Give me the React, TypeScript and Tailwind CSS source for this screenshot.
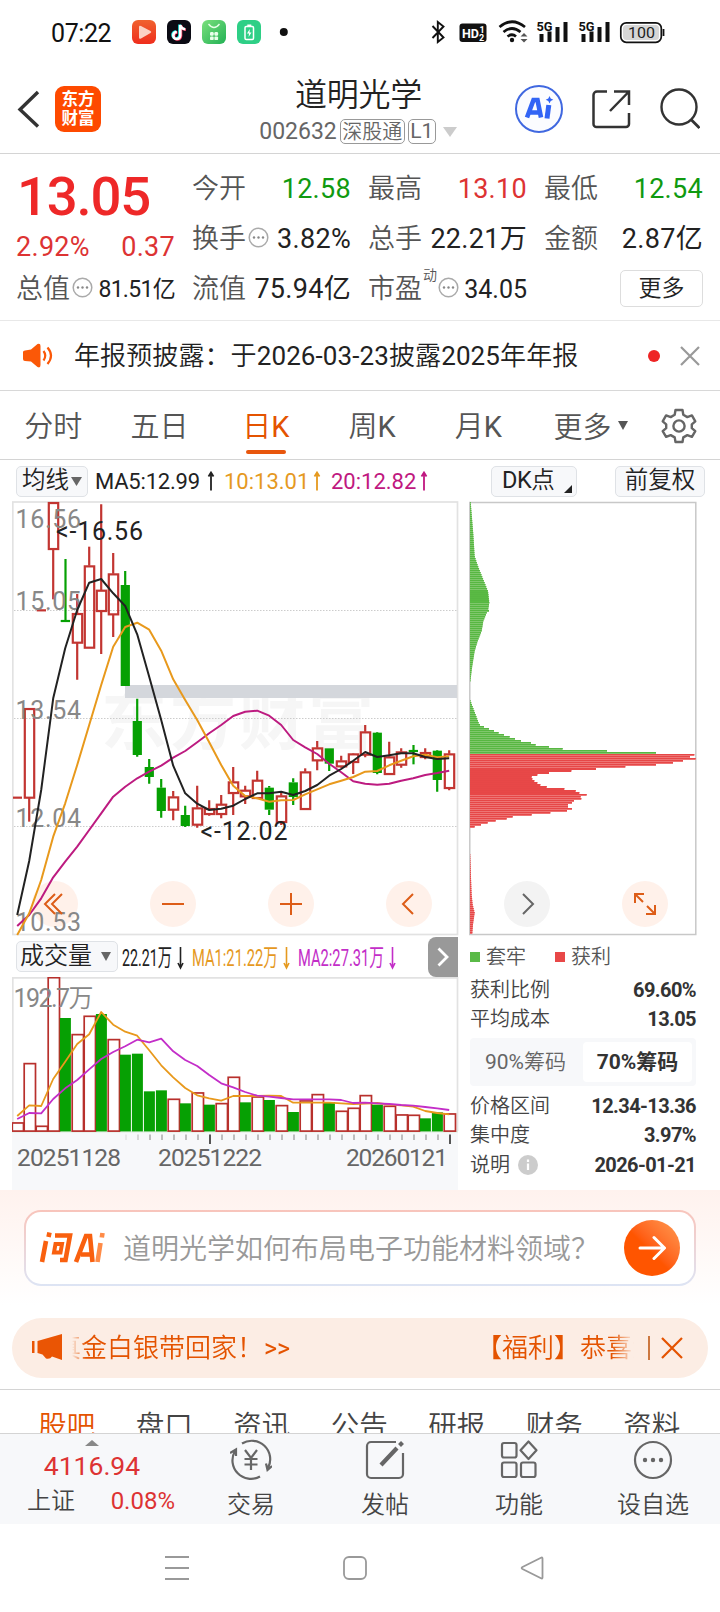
import React from "react";

type Candle = { c: "r" | "g"; hi: number; lo: number; t: number; b: number };

const RED = "#c23531";
const GREEN = "#06a003";

const px = (i: number) => 17.2 + i * 12;
const py = (v: number) => 495 + v / 3;
const vy = (v: number) => 930 + v / 3;

const rawCandles: [("r" | "g"), number, number, number, number][] = [
  ["r", 908, 908, 908, 908], ["r", 640, 980, 640, 909], ["r", 346, 346, 346, 346], ["r", 22, 313, 22, 163],
  ["g", 192, 378, 378, 378], ["r", 297, 554, 355, 444], ["r", 155, 459, 212, 459], ["r", 28, 477, 285, 349],
  ["r", 174, 426, 236, 359], ["g", 228, 573, 270, 573], ["g", 611, 785, 678, 780], ["g", 792, 866, 816, 846],
  ["g", 852, 968, 878, 948], ["r", 888, 976, 905, 945], ["g", 932, 996, 960, 993], ["r", 872, 998, 938, 990],
  ["r", 916, 962, 940, 958], ["r", 900, 970, 927, 958], ["r", 816, 960, 860, 895], ["r", 872, 927, 885, 905],
  ["r", 827, 912, 855, 910], ["g", 873, 960, 878, 944], ["r", 888, 990, 902, 982], ["g", 850, 930, 862, 906],
  ["r", 820, 943, 830, 943], ["r", 738, 826, 758, 797], ["g", 760, 828, 760, 806], ["r", 782, 818, 797, 815],
  ["r", 775, 837, 776, 802], ["r", 690, 787, 710, 780], ["g", 711, 838, 713, 834], ["r", 740, 840, 785, 838],
  ["r", 760, 818, 770, 810], ["g", 750, 808, 768, 768], ["r", 760, 793, 772, 787], ["g", 765, 890, 767, 855],
  ["r", 766, 886, 776, 880],
];
const candles: Candle[] = rawCandles.map(([c, hi, lo, t, b]) => ({ c, hi: py(hi), lo: py(lo), t: py(t), b: py(b) }));

const ma5 = [1260, 1098, 885, 610, 460, 345, 263, 252, 295, 333, 418, 545, 675, 812, 895, 926, 945, 941, 932, 912, 895, 895, 890, 900, 888, 870, 842, 822, 797, 771, 786, 781, 775, 775, 786, 792, 790];
const ma10 = [1320, 1255, 1155, 1025, 925, 810, 690, 570, 455, 396, 383, 404, 467, 553, 615, 675, 742, 810, 872, 903, 910, 920, 916, 915, 898, 883, 868, 857, 846, 830, 828, 811, 797, 784, 779, 787, 784];
const ma20 = [1293, 1260, 1210, 1147, 1100, 1055, 1005, 955, 905, 875, 850, 830, 812, 788, 768, 742, 715, 690, 663, 650, 647, 662, 690, 735, 757, 777, 806, 832, 859, 866, 869, 866, 857, 850, 840, 834, 827];

const volumes = [578, 400, 588, 142, 264, 313, 258, 252, 328, 374, 371, 484, 481, 507, 520, 488, 524, 520, 441, 517, 500, 510, 526, 546, 512, 493, 516, 543, 534, 496, 524, 528, 554, 555, 565, 547, 551];
const volumeColors = "rrrrgrrgrggggrgrgrrgrgrgrrgrrrgrrrggr";
const vma1 = [558, 526, 528, 447, 395, 342, 313, 246, 284, 305, 317, 361, 406, 442, 474, 496, 505, 512, 498, 498, 498, 497, 498, 518, 518, 518, 518, 520, 522, 521, 519, 524, 526, 530, 543, 549, 553];
const vma2 = [567, 549, 550, 507, 475, 450, 418, 387, 366, 349, 329, 337, 326, 364, 390, 408, 435, 460, 472, 486, 497, 500, 504, 508, 508, 508, 508, 510, 519, 518, 520, 522, 525, 527, 531, 535, 540];

const line = (vals: number[], f: (v: number) => number) => vals.map((v, i) => `${px(i)},${f(v).toFixed(1)}`).join(" ");

const chipShape: [number, number][] = [
  [22, 2], [120, 10], [185, 14], [215, 24], [260, 42], [290, 54], [325, 58], [343, 55], [347, 62], [351, 52], [380, 40], [410, 35],
  [440, 23], [470, 14], [520, 6], [570, 0], [615, 0], [655, 15], [690, 28], [697, 42], [703, 57], [709, 72], [715, 86],
  [721, 102], [727, 119], [733, 135], [739, 153], [745, 183], [751, 197], [757, 237], [763, 278], [769, 411], [775, 558],
  [781, 673], [787, 660], [793, 677], [799, 639], [805, 609], [811, 558], [817, 466], [823, 378], [829, 304], [835, 237],
  [841, 202], [847, 185], [853, 187], [859, 193], [865, 202], [871, 211], [877, 230], [883, 283], [889, 317], [895, 328],
  [901, 350], [907, 332], [913, 334], [919, 312], [925, 306], [931, 294], [937, 294], [943, 306], [949, 291], [955, 241],
  [961, 185], [967, 128], [973, 110], [979, 77], [985, 53], [991, 33], [997, 14], [1003, 0], [1060, 0], [1150, 3],
  [1200, 5], [1230, 8], [1255, 14], [1290, 9], [1317, 7],
];
const chipWidth = (y: number) => {
  for (let i = 1; i < chipShape.length; i++) {
    const [y0, w0] = chipShape[i - 1];
    const [y1, w1] = chipShape[i];
    if (y <= y1) return w0 + ((w1 - w0) * (y - y0)) / (y1 - y0);
  }
  return 0;
};
const chipRows: { y: number; w: number; red: boolean; solid: boolean }[] = [];
for (let v = 25; v < 1317; v += 6) {
  const w = chipWidth(v) / 3;
  if (w > 0.2) chipRows.push({ y: Math.round(495 + (v - 3) / 3), w, red: v > 778, solid: (v > 285 && v < 322) || (v > 820 && v < 900) });
}

function Arrow({ color }: { color: string }) {
  return (
    <svg className="shrink-0" width="8" height="20" viewBox="0 0 8 20" fill="none" stroke={color} strokeWidth="1.8">
      <path d="M4 19.500V2M1.500 5.500L4 1.500L6.500 5.500" />
    </svg>
  );
}

function Dots() {
  return (
    <svg className="shrink-0" width="21" height="21" viewBox="0 0 21 21" fill="none">
      <circle cx="10.5" cy="10.5" r="9.3" stroke="#aaa" strokeWidth="1.5" />
      <circle cx="6" cy="10.5" r="1.2" fill="#888" />
      <circle cx="10.5" cy="10.5" r="1.2" fill="#888" />
      <circle cx="15" cy="10.5" r="1.2" fill="#888" />
    </svg>
  );
}

function StatusBar() {
  return (
    <div className="flex h-16 items-center pl-[51px] pr-[55px] text-[#111]">
      <span className="w-[81px] pt-[2px] text-[25px] leading-none tracking-[-0.4px]">07:22</span>
      <svg width="160" height="24" viewBox="0 0 160 24">
        <defs>
          <linearGradient id="s1" x1="0" y1="0" x2="0" y2="1"><stop stopColor="#f0622f" /><stop offset="1" stopColor="#ef2d1c" /></linearGradient>
          <linearGradient id="s2" x1="0" y1="0" x2="1" y2="1"><stop stopColor="#7be07c" /><stop offset="1" stopColor="#22b155" /></linearGradient>
        </defs>
        <rect width="24" height="24" rx="6" fill="url(#s1)" />
        <path d="M7 7Q7 5 9 6L18.500 11Q20 12 18.500 13L9 18.500Q7 19.300 7 17.500Z" fill="#fbd2c4" />
        <rect x="35" width="24" height="24" rx="6" fill="#0b0b14" />
        <g fill="none" strokeWidth="2.600">
          <path d="M47.500 4.500V15A3.500 3.500 0 1 1 44 11.500M47.500 4.500Q48.500 8.500 52.500 8.800" stroke="#25f4ee" />
          <path d="M49 5.500V16A3.500 3.500 0 1 1 45.500 12.500M49 5.500Q50 9.500 54 9.800" stroke="#fe2c55" />
          <path d="M48.300 5V15.500A3.500 3.500 0 1 1 44.800 12M48.300 5Q49.300 9 53.300 9.300" stroke="#fff" />
        </g>
        <rect x="70" width="24" height="24" rx="6" fill="url(#s2)" />
        <path d="M76.500 4Q82 11 87.500 4" fill="none" stroke="#e6ffe6" strokeWidth="1.300" />
        <g fill="#eaffea"><rect x="78" y="12" width="3.700" height="3.700" rx="1.200" /><rect x="82.400" y="12" width="3.700" height="3.700" rx="1.200" /><rect x="78" y="16.400" width="3.700" height="3.700" rx="1.200" /><rect x="82.400" y="16.400" width="3.700" height="3.700" rx="1.200" /></g>
        <rect x="105" width="24" height="24" rx="6" fill="#2ecf86" />
        <rect x="113" y="6.500" width="8.500" height="13" rx="1.200" fill="none" stroke="#fff" strokeWidth="1.500" />
        <rect x="115.300" y="4.500" width="4" height="2" fill="#fff" />
        <path d="M117.800 9L115 13.500H117L116.600 17L119.500 12.500H117.500Z" fill="#fff" />
        <circle cx="151.800" cy="12" r="4" fill="#111" />
      </svg>
      <svg className="ml-auto" width="234" height="24" viewBox="432 20 234 24" fill="none">
        <path d="M433.500 26L444.500 37.500L438.800 42V22L444.500 26.500L433.500 38" stroke="#111" strokeWidth="1.900" />
        <rect x="460.500" y="23.500" width="27" height="18.500" rx="3" fill="#111" />
        <text x="463" y="38" fontSize="13.500" fontWeight="700" fill="#fff" textLength="17" lengthAdjust="spacingAndGlyphs">HD</text>
        <text x="480.500" y="33" fontSize="9" fontWeight="700" fill="#fff">1</text>
        <text x="480" y="41" fontSize="9" fontWeight="700" fill="#fff">2</text>
        <g stroke="#111" strokeWidth="2.700"><path d="M500.500 27Q513 16.500 526 27" /><path d="M504.500 32Q513 25 521.500 32" /><path d="M508.500 36.500Q513 33 517 36.500" /></g>
        <circle cx="513" cy="40" r="2.200" fill="#111" />
        <path d="M521.500 36.500L525 33L528.500 36.500ZM521.500 39L525 42.500L528.500 39Z" fill="#555" />
        {[538, 580].map((x) => (
          <g key={x} fill="#111">
            <text x={x - 0.5} y="31" fontSize="13" fontWeight="700" textLength="16" lengthAdjust="spacingAndGlyphs">5G</text>
            <rect x={x + 2.5} y="34" width="4" height="8" /><rect x={x + 10.5} y="31.500" width="4" height="10.500" />
            <rect x={x + 18.5} y="27" width="4" height="15" /><rect x={x + 26.5} y="22" width="4" height="20" />
          </g>
        ))}
        <rect x="621.800" y="22.800" width="40.500" height="19.500" rx="5.500" fill="#fff" stroke="#111" strokeWidth="1.700" />
        <rect x="624" y="25" width="36" height="15" rx="3.500" fill="#d6d6d6" />
        <path d="M664.500 29V36" stroke="#111" strokeWidth="1.800" />
        <text x="629" y="37.500" fontSize="14.500" fill="#222" textLength="27" lengthAdjust="spacingAndGlyphs">100</text>
      </svg>
    </div>
  );
}

function Header() {
  return (
    <div className="flex h-[90px] items-center border-b border-[#d4d4d4] pl-[17px] pr-5">
      <svg width="24" height="40" viewBox="17 89 24 40" fill="none" stroke="#333" strokeWidth="3.400"><path d="M38 92L20 109.500L38 126.500" /></svg>
      <div className="ml-[14px] flex h-[46px] w-[46px] flex-col items-center justify-center gap-[2px] rounded-[9px] bg-[#fe4a00] text-[16.5px] font-bold leading-[17px] text-white">
        <span>东方</span>
        <span>财富</span>
      </div>
      <div className="ml-[157px] flex w-[200px] flex-col items-center pt-[3px]">
        <div className="pl-px text-[32px] font-[350] leading-[38px] tracking-[-0.3px] text-[#222]">道明光学</div>
        <div className="mt-[5px] flex h-[26px] items-center text-[#666]">
          <span className="text-[23px] leading-none">002632</span>
          <span className="ml-[3px] flex h-[25px] w-[65px] items-center justify-center rounded-[5px] border-[1.5px] border-[#999] text-[20px] font-[350] leading-none">深股通</span>
          <span className="ml-[3px] flex h-[25px] w-[28px] items-center justify-center rounded-[5px] border-[1.5px] border-[#999] text-[21px] leading-none">L1</span>
          <svg className="ml-[7px]" width="14" height="10" viewBox="0 0 14 10"><path d="M0 0H14L7 10Z" fill="#ccc" /></svg>
        </div>
      </div>
      <svg className="ml-auto" width="186" height="50" viewBox="514 84 186 50" fill="none">
        <circle cx="539" cy="109" r="23" stroke="#4068e0" strokeWidth="2" fill="#fbfcff" />
        <path d="M527 117.500L533.500 100H537.500L541 117.500M530 112.500H539" stroke="#3264f5" strokeWidth="4.600" />
        <path d="M548.800 105L547 118.500" stroke="#3264f5" strokeWidth="5" />
        <path d="M549.500 96L550.700 98.600L553.300 99.800L550.700 101L549.500 103.600L548.300 101L545.700 99.800L548.300 98.600Z" fill="#3264f5" />
        <path d="M607 91.500H597A3.500 3.500 0 0 0 593.500 95V124A3 3 0 0 0 596.500 127H626A3 3 0 0 0 629 124V113M610 111L628.500 92M614 91.500H629V105" stroke="#333" strokeWidth="2.500" />
        <circle cx="679" cy="107" r="17.500" stroke="#333" strokeWidth="2.400" />
        <path d="M691 119.500L699.500 128" stroke="#333" strokeWidth="2.800" />
      </svg>
    </div>
  );
}

function Cell({ label, value, color = "text-[#222]", dots, size = "text-[27px] tracking-[0.3px]" }: { label: string; value: string; color?: string; dots?: boolean; size?: string }) {
  return (
    <div className="flex h-[50px] items-center whitespace-nowrap leading-none">
      <span className="text-[27px] font-[350] text-[#555]">{label}</span>
      {dots && <span className="mb-[3px] ml-[2px]"><Dots /></span>}
      <span className={`ml-auto ${size} ${color}`}>{value}</span>
    </div>
  );
}

function Quote() {
  return (
    <div className="grid h-[167px] grid-cols-[159px_159px_159px_159px] grid-rows-[50px_50px_50px] gap-x-[17px] border-b border-[#e8e8e8] pl-4 pr-[16px] pt-[10px]">
      <div className="row-span-2 leading-none">
        <div className="pl-[1px] pt-[5px] text-[54.5px] font-medium tracking-[-1.2px] text-[#ee2828]">13.05</div>
        <div className="mt-[10px] flex justify-between text-[27px] tracking-[0.3px] text-[#dd3333]"><span>2.92%</span><span>0.37</span></div>
      </div>
      <Cell label="今开" value="12.58" color="text-[#109a10]" />
      <Cell label="最高" value="13.10" color="text-[#dd3333]" />
      <Cell label="最低" value="12.54" color="text-[#109a10]" />
      <Cell label="换手" value="3.82%" dots />
      <Cell label="总手" value="22.21万" />
      <Cell label="金额" value="2.87亿" />
      <Cell label="总值" value="81.51亿" dots size="text-[23px] tracking-[-0.7px]" />
      <Cell label="流值" value="75.94亿" />
      <div className="flex h-[50px] items-center whitespace-nowrap leading-none">
        <span className="text-[27px] font-[350] text-[#555]">市盈</span>
        <span className="mb-[28px] ml-[1px] text-[14px] font-[350] text-[#555]">动</span>
        <span className="mb-[3px] ml-[1px]"><Dots /></span>
        <span className="ml-auto text-[25px] text-[#222]">34.05</span>
      </div>
      <div className="flex h-[48px] items-center justify-end">
        <div className="flex h-[37px] w-[83px] items-center justify-center rounded-[5px] border-[1.5px] border-[#ddd] text-[23px] font-[350] leading-none text-[#222]">更多</div>
      </div>
    </div>
  );
}

function Notice() {
  return (
    <div className="flex h-[70px] items-center border-b border-[#d8d8d8] pl-[22px] pr-[20px]">
      <svg width="31" height="26" viewBox="0 0 31 26" fill="none">
        <path d="M1 9Q1 7.500 3 7.500L9 6.500L15.500 1Q18.500 0 18.500 3V22Q18.500 25.500 15.500 24L9 18.500L3 18Q1 18 1 16Z" fill="#fb5807" />
        <path d="M21.500 8Q25 12.500 21.500 17.500M25.500 4.500Q32.500 12.500 25.500 21" stroke="#fb5807" strokeWidth="2.200" />
      </svg>
      <span className="ml-[21px] whitespace-nowrap text-[26px] font-[350] leading-none tracking-[0.1px] text-[#222]">
        年报预披露：于<span className="font-normal">2026-03-23</span>披露<span className="font-normal">2025</span>年年报
      </span>
      <span className="ml-auto h-3 w-3 rounded-full bg-[#ee2424]" />
      <svg className="ml-5" width="20" height="20" viewBox="0 0 20 20" stroke="#999" strokeWidth="2.200"><path d="M1 1L19 19M19 1L1 19" /></svg>
    </div>
  );
}

function PeriodTabs() {
  return (
    <div className="flex h-[69px] border-b border-[#d4d4d4] text-[29px] leading-none text-[#555]">
      {["分时", "五日", "日K", "周K", "月K"].map((t) => (
        <div key={t} className={`flex w-[106.3px] shrink-0 flex-col items-center pt-[22px] font-[350] ${t === "日K" ? "text-[#e45300]" : ""}`}>
          <span>{t[0]}{t[1] === "K" ? <span className="font-normal">K</span> : t[1]}</span>
          {t === "日K" && <span className="mt-[8px] h-[4px] w-10 rounded-sm bg-[#e8560d]" />}
        </div>
      ))}
      <div className="flex h-[74px] items-center pl-[22px] font-[350]">更多</div>
      <svg className="ml-[6px] mt-[30px]" width="10" height="9" viewBox="0 0 10 9"><path d="M0 0H10L5 9Z" fill="#555" /></svg>
      <svg className="ml-auto mr-[23px] mt-[17px]" width="36" height="36" viewBox="0 0 36 36" fill="none" stroke="#666" strokeWidth="2.400">
        <path d="M14.500 2H21.500L22.300 6.800L26.300 9.100L30.900 7.400L34.300 13.300L30.800 16.300V20.200L34.300 23.200L30.900 28.800L26.300 27.100L22.300 29.400L21.500 34H14.500L13.700 29.400L9.700 27.100L5.100 28.800L1.700 23.200L5.200 20.200V16.300L1.700 13.300L5.100 7.400L9.700 9.100L13.700 6.800Z" strokeLinejoin="round" />
        <circle cx="18" cy="18" r="5.600" />
      </svg>
    </div>
  );
}

function ChartToolbar() {
  return (
    <div className="flex h-[41px] items-center pl-4 pr-[15px] text-[22px] leading-none">
      <div className="mt-px flex h-[31px] w-[72px] shrink-0 items-center rounded-[5px] border border-[#dfe2e6] bg-[#f7f8fa] pl-[5px] text-[23.5px] font-[350] text-[#222]">
        均线
        <svg className="ml-[2px]" width="11" height="9" viewBox="0 0 11 9"><path d="M0 0H11L5.500 9Z" fill="#666" /></svg>
      </div>
      <span className="ml-[7px] w-[107px] shrink-0 pt-[2px] tracking-[-0.2px] text-[#222]">MA5:12.99</span>
      <span className="ml-[5px] w-[17px]"><Arrow color="#222" /></span>
      <span className="w-[89px] shrink-0 pt-[2px] text-[#e5991f]">10:13.01</span>
      <span className="w-[18px]"><Arrow color="#e5991f" /></span>
      <span className="w-[89px] shrink-0 pt-[2px] text-[#c01880]">20:12.82</span>
      <Arrow color="#c01880" />
      <div className="ml-auto mt-px flex h-[31px] w-[86px] shrink-0 items-center rounded-[5px] border border-[#dfe2e6] bg-[#f7f8fa] pl-[10px] text-[23.5px] font-[350] text-[#222]">
        <span className="font-normal tracking-[-0.5px]">DK</span>点
        <svg className="ml-auto mr-[4px] mt-4" width="8" height="8" viewBox="0 0 8 8"><path d="M8 0V8H0Z" fill="#222" /></svg>
      </div>
      <div className="ml-[38px] mt-px flex h-[31px] w-[90px] shrink-0 items-center justify-center rounded-[5px] border border-[#dfe2e6] bg-[#f7f8fa] text-[23.5px] font-[350] text-[#222]">前复权</div>
    </div>
  );
}

function KLine() {
  return (
    <svg className="block" width="448" height="435" viewBox="12 501 448 435" fill="none">
      <text x="101" y="744" fontSize="66" fontWeight="700" fill="#f6f6f6" textLength="273">东方财富</text>
      <rect x="12.800" y="502" width="444.700" height="432.500" stroke="#e2e2e2" strokeWidth="1.700" />
      {[610.5, 718.5, 826.5].map((y) => <path key={y} d={`M14 ${y}H457`} stroke="#ccc" strokeWidth="1" strokeDasharray="1.500 1.500" />)}
      <rect x="125" y="685" width="332" height="13" fill="#d4d7dc" />
      <g fill="#fff1ea"><circle cx="55" cy="904" r="23" /><circle cx="173" cy="904" r="23" /><circle cx="291" cy="904" r="23" /><circle cx="409" cy="904" r="23" /></g>
      {candles.map((k, i) => {
        const x = px(i);
        const col = k.c === "r" ? RED : GREEN;
        if (k.b - k.t < 1)
          return (
            <g key={i} stroke={col} strokeWidth="2.200">
              <path d={`M${i ? x - 4.5 : 13} ${k.t}H${x + 4.8}`} />
              {k.lo > k.hi && <path d={`M${x + 0.3} ${k.hi}V${k.lo}`} />}
            </g>
          );
        return (
          <g key={i} stroke={col} strokeWidth="2.200">
            <path d={`M${x} ${k.hi}V${k.t}M${x} ${k.b}V${k.lo}`} />
            {k.c === "r" ? <rect x={x - 4.4} y={k.t + 0.7} width="9.400" height={Math.max(k.b - k.t - 1, 1)} /> : <rect x={x - 4.5} y={k.t} width="9.200" height={k.b - k.t} fill={col} stroke="none" />}
          </g>
        );
      })}
      <g fontSize="25" fill="#888">
        <text x="15.500" y="527.500" textLength="65.500">16.56</text>
        <text x="15.500" y="609.500" textLength="65.500">15.05</text>
        <text x="15.500" y="718.500" textLength="65.500">13.54</text>
        <text x="15.500" y="827" textLength="65.500">12.04</text>
        <text x="15.500" y="931" textLength="65.500">10.53</text>
      </g>
      <g strokeWidth="2" strokeLinejoin="round">
        <polyline points={line(ma20, py)} stroke="#bd1b80" />
        <polyline points={line(ma10, py)} stroke="#e8991c" />
        <polyline points={line(ma5, py)} stroke="#222" />
      </g>
      <text x="56" y="540" fontSize="25" fill="#222" textLength="87">&lt;-16.56</text>
      <text x="200.500" y="840" fontSize="25" fill="#222" textLength="87">&lt;-12.02</text>
      <g stroke="#dd5d18" strokeWidth="2">
        <path d="M55 894L45 904L55 914M62 894L52 904L62 914M162 904H184M280 904H302M291 893V915M413 894L403 904L413 914" />
      </g>
    </svg>
  );
}

function VolumeHeader() {
  return (
    <div className="flex h-[41px] items-center pl-1">
      <div className="mb-px flex h-[31px] w-[102px] shrink-0 items-center rounded-[5px] border border-[#dfe2e6] bg-[#f7f8fa] pl-[3px] text-[24px] font-[350] leading-none text-[#222]">
        成交量
        <svg className="ml-[9px]" width="10" height="9" viewBox="0 0 10 9"><path d="M0 0H10L5 9Z" fill="#666" /></svg>
      </div>
      <svg className="ml-[3px] shrink-0" width="280" height="40" viewBox="121 936 280 40" fontSize="24">
        <text x="122" y="964.500" fill="#222" textLength="50" lengthAdjust="spacingAndGlyphs">22.21万</text>
        <text x="192" y="964.500" fill="#e5991f" textLength="86" lengthAdjust="spacingAndGlyphs">MA1:21.22万</text>
        <text x="298" y="964.500" fill="#c32ec8" textLength="86" lengthAdjust="spacingAndGlyphs">MA2:27.31万</text>
        <g fill="none" strokeWidth="1.600">
          <path d="M180.500 946V967M178 962L180.500 967L183 962" stroke="#222" />
          <path d="M286.500 946V967M284 962L286.500 967L289 962" stroke="#e5991f" />
          <path d="M392.500 946V967M390 962L392.500 967L395 962" stroke="#c32ec8" />
        </g>
      </svg>
      <div className="ml-auto flex h-10 w-[30px] shrink-0 items-center justify-center rounded-l-lg bg-[#999]">
        <svg width="12" height="20" viewBox="0 0 12 20" fill="none" stroke="#fff" strokeWidth="2.800"><path d="M1.500 1.500L10 10L1.500 18.500" /></svg>
      </div>
    </div>
  );
}

function Volume() {
  return (
    <svg className="block" width="448" height="213" viewBox="12 977 448 213" fill="none">
      <rect x="12" y="1132" width="446" height="58" fill="#f7f8fa" />
      <path d="M12.800 1131V977.800H457.500V1131" stroke="#e2e2e2" strokeWidth="1.700" />
      <path d="M12 1131.800H458" stroke="#cfe3cf" strokeWidth="1" />
      {volumes.map((v, i) => {
        const t = vy(v);
        return volumeColors[i] === "r" ? (
          <rect key={i} x={px(i) - 5} y={t + 0.3} width="11.300" height={1130.8 - t} stroke="#b8302c" strokeWidth="1.700" />
        ) : (
          <rect key={i} x={px(i) - 5.3} y={t} width="11" height={1131.4 - t} fill={GREEN} />
        );
      })}
      <text x="13.500" y="1006.500" fontSize="25" fill="#888" textLength="80">192.7<tspan fontWeight="350">万</tspan></text>
      <g strokeWidth="1.800" strokeLinejoin="round">
        <polyline points={line(vma1, vy)} stroke="#e8991c" />
        <polyline points={line(vma2, vy)} stroke="#c32ec8" />
      </g>
      {Array.from({ length: 28 }, (_, n) => {
        const x = 126 + n * 12;
        const big = n === 7 || n === 27;
        return <path key={n} d={`M${x} 1134.500V${big ? 1144 : 1140}`} stroke={big ? "#555" : n < 1 ? "#e3e3e3" : n < 2 ? "#ccc" : "#aaa"} strokeWidth={big ? 2 : 1.5} />;
      })}
      <g fontSize="24.500" fill="#666">
        <text x="17" y="1166" textLength="104">20251128</text>
        <text x="158" y="1166" textLength="104">20251222</text>
        <text x="346" y="1166" textLength="102">20260121</text>
      </g>
    </svg>
  );
}

function ChipChart() {
  return (
    <svg className="block" width="229" height="435" viewBox="469 501 229 435" fill="none">
      <rect x="469.800" y="502.500" width="226" height="432" stroke="#c8c8c8" strokeWidth="1.500" />
      {chipRows.map((r) => (
        <g key={r.y}>
          <rect x="470" y={r.y} width={r.w} height="2" fill={r.red ? (r.solid ? "#e84848" : "#ee7474") : r.solid ? "#5aba44" : "#7fc76c"} />
          <rect x="470" y={r.y} width={r.w} height="1" fill={r.red ? "#e64747" : "#57b742"} />
        </g>
      ))}
      <circle cx="527" cy="904" r="23" fill="#f3f3f3" />
      <circle cx="645" cy="904" r="23" fill="#fff1ea" />
      <path d="M523 894L533 904L523 914" stroke="#666" strokeWidth="2" />
      <path d="M643 902L635.500 894.500M635 903V894H644M647 906L654.500 913.500M655 905V914H646" stroke="#dd5d18" strokeWidth="2" />
    </svg>
  );
}

function Stat({ label, value, info }: { label: string; value: string; info?: boolean }) {
  return (
    <div className="flex h-[29.5px] items-center leading-none">
      <span className="text-[20px] font-[350] text-[#444]">{label}</span>
      {info && (
        <svg className="ml-[8px]" width="20" height="20" viewBox="0 0 20 20"><circle cx="10" cy="10" r="10" fill="#ccc" /><path d="M10 8.500V15M10 4.500V7" stroke="#fff" strokeWidth="2.200" /></svg>
      )}
      <span className="ml-auto text-[20px] font-bold tracking-[-0.6px] text-[#333]">{value}</span>
    </div>
  );
}

function ChipStats() {
  return (
    <div className="ml-[1px] w-[226px] leading-none">
      <div className="flex h-[39px] items-center pt-[2px] text-[20px] font-[350] text-[#555]">
        <span className="h-[10px] w-[10px] bg-[#5aba47]" />
        <span className="ml-[6px] w-[69px]">套牢</span>
        <span className="h-[10px] w-[10px] bg-[#e84848]" />
        <span className="ml-[6px]">获利</span>
      </div>
      <Stat label="获利比例" value="69.60%" />
      <Stat label="平均成本" value="13.05" />
      <div className="mb-[5px] mt-[4px] flex h-12 items-center rounded bg-[#f7f8fa] text-[21px] text-[#666]">
        <span className="w-[113px] pl-[15px] font-[350]"><span className="font-normal">90%</span>筹码</span>
        <span className="flex h-10 w-[109px] items-center justify-center rounded bg-white font-bold text-[#333]">70%筹码</span>
      </div>
      <Stat label="价格区间" value="12.34-13.36" />
      <Stat label="集中度" value="3.97%" />
      <Stat label="说明" value="2026-01-21" info />
    </div>
  );
}

function AskBar() {
  return (
    <div className="h-[128px] bg-linear-to-b from-[#fff2ee] to-white to-90% px-6 pt-5">
      <div className="h-[76px] rounded-[17px] bg-linear-to-b from-[#f8c4bb] to-[#dde4f4] p-[2px]">
        <div className="flex h-full items-center rounded-[15px] bg-white pl-[13px] pr-[14px]">
          <svg width="68" height="34" viewBox="-1 0 68 34" fill="none" stroke="#f9600f" strokeWidth="4.600">
            <path d="M6 10L2 31M9.500 1.500L8.500 6M15 4.500H30L25.500 29H20" />
            <path d="M15.500 13H22L20.500 21.500H14Z" strokeWidth="4" />
            <path d="M36 31L46 5H50L52.500 31M41 23.500H51" />
            <path d="M60.500 12L57.500 31M62.500 2L61.800 6.500" stroke="#ff8b47" />
          </svg>
          <span className="ml-[16px] mt-[4px] whitespace-nowrap text-[28px] font-[350] leading-none text-[#999]">道明光学如何布局电子功能材料领域？</span>
          <span className="ml-auto flex h-14 w-14 shrink-0 items-center justify-center rounded-full bg-linear-to-tr from-[#ff5500] from-45% to-[#ff9a50]">
            <svg width="28" height="26" viewBox="0 0 28 26" fill="none" stroke="#fff" strokeWidth="3" strokeLinecap="round" strokeLinejoin="round"><path d="M2 13H26M16 2.500L26.500 13L16 23.500" /></svg>
          </span>
        </div>
      </div>
    </div>
  );
}

function Banner() {
  return (
    <div className="mx-3 flex h-[60px] items-center rounded-full bg-[#fcede4] pl-[19px] pr-[25px] text-[#e45300]">
      <svg className="mt-[-2px]" width="31" height="28" viewBox="0 0 31 28" fill="#ea5504"><path d="M1 8H3.500V20H1ZM6.500 8L31 1V27L21 23.500Q19 26.500 15 25.500L11.500 21.500L6.500 20Z" /></svg>
      <div className="ml-[10px] flex w-[568px] justify-between overflow-hidden whitespace-nowrap text-[26px] font-[350] leading-[38px] [mask-image:linear-gradient(to_right,transparent,black_14px,black_540px,transparent_562px)]">
        <span className="ml-[-17px] pt-px">真金白银带回家！<span className="ml-[1px] text-[25px] font-normal">&gt;&gt;</span></span>
        <span className="-mr-[18px] pt-px">【福利】恭喜您</span>
      </div>
      <span className="ml-[8px] h-6 w-[1.5px] bg-[#cc7840]" />
      <svg className="ml-auto" width="22" height="22" viewBox="0 0 22 22" stroke="#e45300" strokeWidth="2.200"><path d="M1 1L21 21M21 1L1 21" /></svg>
    </div>
  );
}

function BottomItem({ label, children }: { label: string; children: React.ReactNode }) {
  return (
    <div className="flex w-[134px] flex-col items-center pt-[5px]">
      <svg width="42" height="42" viewBox="0 0 42 42" fill="none" stroke="#666" strokeWidth="2.200">{children}</svg>
      <span className="mt-[12px] text-[24px] font-[350] leading-none text-[#444]">{label}</span>
    </div>
  );
}

export default function App() {
  return (
    <div className="h-[1612px] w-[720px] overflow-hidden bg-white [font-family:Roboto,'Noto_Sans_CJK_SC',sans-serif]">
      <StatusBar />
      <Header />
      <Quote />
      <Notice />
      <PeriodTabs />
      <ChartToolbar />
      <div className="flex h-[689px] pl-3">
        <div className="w-[446px]">
          <KLine />
          <VolumeHeader />
          <Volume />
        </div>
        <div className="ml-[11px]">
          <ChipChart />
          <ChipStats />
        </div>
      </div>
      <AskBar />
      <Banner />
      <div className="mt-[11px] h-[45px] overflow-hidden border-b border-t border-[#d4d4d4] pl-[18px]">
        <div className="flex pt-[21px] text-[28.5px] font-[350] leading-[32px] text-[#444]">
          {["股吧", "盘口", "资讯", "公告", "研报", "财务", "资料"].map((t, i) => (
            <span key={t} className={`w-[97.5px] shrink-0 text-center ${i ? "" : "text-[#e45300]"}`}>{t}</span>
          ))}
        </div>
      </div>
      <div className="flex h-[90px] bg-[#f7f8fa]">
        <div className="w-[184px] leading-none">
          <svg className="ml-[85px] mt-[6px] block" width="14" height="6" viewBox="0 0 14 6"><path d="M0 6L7 0L14 6Z" fill="#888" /></svg>
          <div className="mt-[7px] text-center text-[26.5px] text-[#dd3333]">4116.94</div>
          <div className="mt-[9px] flex items-center justify-between pl-[27px] pr-[9px] text-[24px]">
            <span className="font-[350] text-[#444]">上证</span>
            <span className="text-[#dd3333]">0.08%</span>
          </div>
        </div>
        <BottomItem label="交易">
          <path d="M12 4.500A18.500 18.500 0 0 1 38 29M30 37.500A18.500 18.500 0 0 1 5 12M0 14L6 10.500V17M42 27L37.500 31L36 24.500" />
          <path d="M15 11L21 19L27 11M21 19V31M14.500 20H27.500M14.500 25.500H27.500" />
        </BottomItem>
        <BottomItem label="发帖">
          <path d="M32 3H7A4 4 0 0 0 3 7V35A4 4 0 0 0 7 39H35A4 4 0 0 0 39 35V14" />
          <path d="M17 26L33 9M35.500 6.500L38.500 3.500" strokeWidth="4.200" />
        </BottomItem>
        <BottomItem label="功能">
          <rect x="4" y="4" width="14.500" height="14.500" rx="2" /><rect x="4" y="23.500" width="14.500" height="14.500" rx="2" /><rect x="23" y="23.500" width="14.500" height="14.500" rx="2" />
          <path d="M30.500 2.500L38.500 11.200L30.500 20L22.500 11.200Z" strokeLinejoin="round" />
        </BottomItem>
        <BottomItem label="设自选">
          <circle cx="21" cy="21" r="18" />
          <g fill="#666" stroke="none"><circle cx="13" cy="21" r="2.200" /><circle cx="21" cy="21" r="2.200" /><circle cx="29" cy="21" r="2.200" /></g>
        </BottomItem>
      </div>
      <div className="flex h-[88px] items-center justify-between pl-[165px] pr-[176px]">
        <svg width="24" height="26" viewBox="0 0 24 26" stroke="#999" strokeWidth="1.800"><path d="M0 2H24M0 13H24M0 24H24" /></svg>
        <svg width="24" height="26" viewBox="0 0 24 26" fill="none" stroke="#999" strokeWidth="1.800"><rect x="1" y="2" width="22" height="22" rx="5" /></svg>
        <svg width="24" height="26" viewBox="0 0 24 26" fill="none" stroke="#999" strokeWidth="1.800" strokeLinejoin="round"><path d="M22.500 3.500V22.500Q22.500 24 21 23.300L2.500 14Q0.800 13 2.500 12L21 2.700Q22.500 2 22.500 3.500Z" /></svg>
      </div>
    </div>
  );
}
